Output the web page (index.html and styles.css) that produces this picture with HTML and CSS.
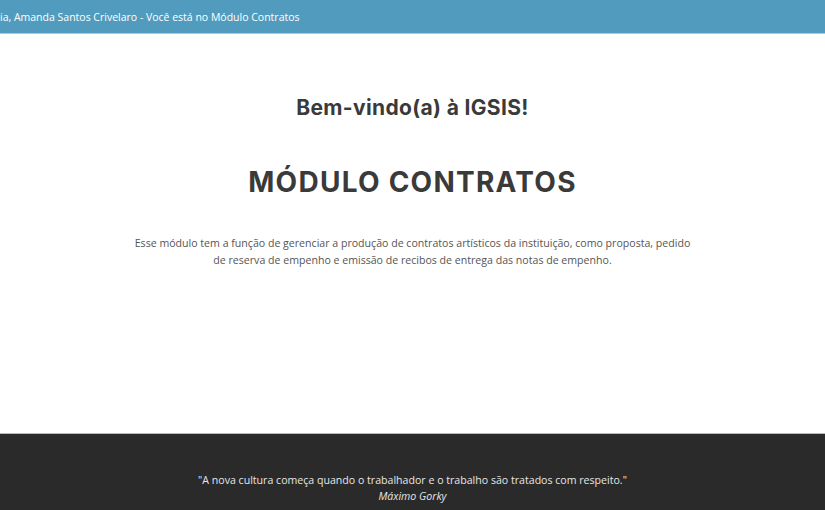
FILE: index.html
```html
<!DOCTYPE html>
<html lang="pt-BR">
<head>
<meta charset="utf-8">
<title>IGSIS - Módulo Contratos</title>
<link rel="stylesheet" href="styles.css">
</head>
<body>
<header class="topbar">
  <p class="greeting">ia, Amanda Santos Crivelaro - Você está no Módulo Contratos</p>
</header>
<main class="intro">
  <h2 class="welcome">Bem-vindo(a) à IGSIS!</h2>
  <h1 class="module">MÓDULO CONTRATOS</h1>
  <p class="desc">Esse módulo tem a função de gerenciar a produção de contratos artísticos da instituição, como proposta, pedido de reserva de empenho e emissão de recibos de entrega das notas de empenho.</p>
</main>
<footer class="footer">
  <p class="quote">"A nova cultura começa quando o trabalhador e o trabalho são tratados com respeito."</p>
  <p class="author">Máximo Gorky</p>
</footer>
</body>
</html>
```
FILE: styles.css
```css
html, body {
  margin: 0;
  padding: 0;
  background: #fff;
}
body {
  font-family: "Open Sans", "Liberation Sans", sans-serif;
  height: 510px;
  overflow: hidden;
  display: flex;
  flex-direction: column;
}
.topbar {
  background: #519cbe;
  height: 34px;
  border-bottom: 1px solid #a9cde0;
  box-sizing: border-box;
  display: flex;
  align-items: center;
}
.greeting {
  margin: 0;
  color: #fff;
  font-size: 10.5px;
  padding-left: 0;
}
.intro {
  flex: 1;
  text-align: center;
  padding-top: 60px;
  box-sizing: border-box;
}
.welcome {
  margin: 0;
  font-family: "Inter", "Open Sans", sans-serif;
  font-weight: 700;
  font-size: 21px;
  letter-spacing: 0.35px;
  color: #3a3a3a;
  line-height: 28px;
}
.module {
  margin: 42px 0 0;
  font-family: "Inter", "Open Sans", sans-serif;
  font-weight: 700;
  font-size: 28px;
  letter-spacing: 1.25px;
  color: #3a3a3a;
  line-height: 36px;
}
.desc {
  margin: 35px auto 0;
  width: 570px;
  font-size: 10.6px;
  line-height: 17px;
  color: #555;
}
.footer {
  height: 77px;
  background: #2a2a2a;
  border-top: 1px solid #bbb;
  box-sizing: border-box;
  text-align: center;
  padding-top: 38px;
  color: #e6e6e6;
  font-size: 10.6px;
  line-height: 16px;
}
.footer p {
  margin: 0;
}
.author {
  font-style: italic;
}
```
